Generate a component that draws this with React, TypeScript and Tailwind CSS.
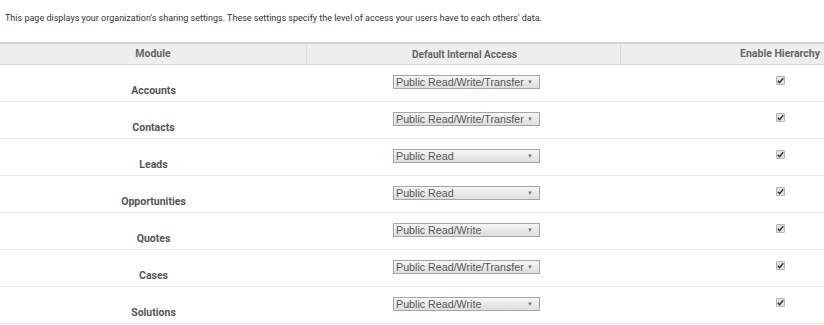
const rows = [
  { module: "Accounts", access: "Public Read/Write/Transfer" },
  { module: "Contacts", access: "Public Read/Write/Transfer" },
  { module: "Leads", access: "Public Read" },
  { module: "Opportunities", access: "Public Read" },
  { module: "Quotes", access: "Public Read/Write" },
  { module: "Cases", access: "Public Read/Write/Transfer" },
  { module: "Solutions", access: "Public Read/Write" },
];

function FakeSelect({ value }: { value: string }) {
  return (
    <div className="flex h-[14px] w-[147px] items-center justify-between whitespace-nowrap border border-[#a5a5a5] bg-gradient-to-b from-[#f6f6f6] to-[#dedede] pl-[2px] pr-[6px] font-['Liberation_Sans',Arial,sans-serif] text-[10.7px] leading-none text-[#555]">
      <span>{value}</span>
      <span className="text-[6px] text-[#777]">▼</span>
    </div>
  );
}

function Check() {
  return (
    <div className="flex h-[9px] w-[9px] items-center justify-center rounded-[1px] border border-[#b5b5b5] bg-[#e2e2e2]">
      <svg width="7" height="7" viewBox="0 0 7 7">
        <path d="M0.8 3.8 L2.6 5.6 L6.2 1.2" fill="none" stroke="#333" strokeWidth="1.4" />
      </svg>
    </div>
  );
}

export default function App() {
  return (
    <div className="w-[824px] h-[325px] overflow-hidden bg-white font-['Roboto',sans-serif]">
      <p className="pl-[5px] pt-[12px] text-[9px] leading-[13px] text-[#333]">
        This page displays your organization's sharing settings. These settings specify the level of access your users have to each others' data.
      </p>
      <div className="mt-[17px] grid grid-cols-[307px_314px_1fr] border-t-2 border-[#d4d4d4]">
        <div className="flex h-[21px] items-center justify-center border-b border-r border-[#dcdcdc] bg-[#eeeeee] text-[10.5px] font-bold text-[#666]">
          Module
        </div>
        <div className="flex h-[21px] items-center justify-center border-b border-r border-[#dcdcdc] bg-[#eeeeee] pl-[2px] text-[10px] font-bold text-[#666]">
          Default Internal Access
        </div>
        <div className="flex h-[21px] items-center justify-end border-b border-[#dcdcdc] bg-[#eeeeee] pr-[4px] text-[10.5px] font-bold text-[#666]">
          Enable Hierarchy
        </div>
        {rows.map((r) => (
          <div key={r.module} className="contents">
            <div className="flex h-[37px] items-start justify-center border-b border-[#e8e8e8] pt-[18px] text-[10.5px] font-bold text-[#555]">
              {r.module}
            </div>
            <div className="flex h-[37px] items-start justify-center border-b border-[#e8e8e8] pl-[5px] pt-[10px]">
              <FakeSelect value={r.access} />
            </div>
            <div className="flex h-[37px] items-start justify-end border-b border-[#e8e8e8] pr-[39px] pt-[11px]">
              <Check />
            </div>
          </div>
        ))}
      </div>
    </div>
  );
}
